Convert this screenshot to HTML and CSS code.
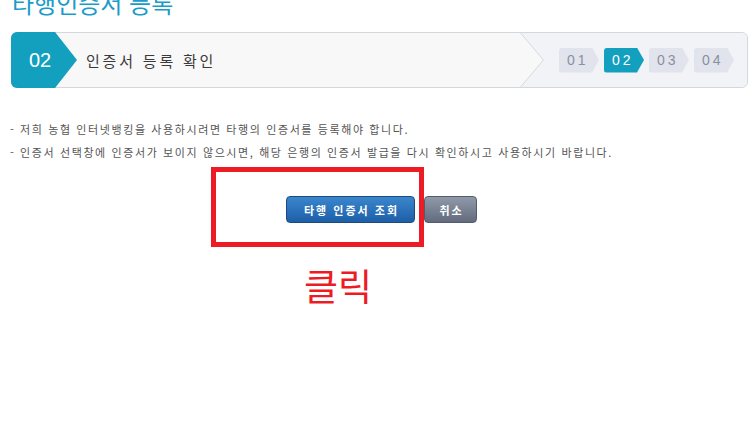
FILE: index.html
```html
<!DOCTYPE html>
<html lang="ko">
<head>
<meta charset="utf-8">
<link rel="stylesheet" href="styles.css">
</head>
<body>
<h1 class="title">타행인증서 등록</h1>
<div class="stepbar">
  <div class="badge">02</div>
  <div class="label">인증서 등록 확인</div>
  <svg class="sep" width="24" height="54" viewBox="0 0 24 54" preserveAspectRatio="none">
    <polygon points="0.5,0 24,0 24,54 0.5,54 23.5,27" fill="#f2f3f6"/>
    <polyline points="0.5,0 23.5,27 0.5,54" fill="none" stroke="#d6d9df" stroke-width="1"/>
  </svg>
  <div class="steps">
    <span class="chip">01</span>
    <span class="chip active">02</span>
    <span class="chip">03</span>
    <span class="chip">04</span>
  </div>
</div>
<ul class="notes">
  <li>- 저희 농협 인터넷뱅킹을 사용하시려면 타행의 인증서를 등록해야 합니다.</li>
  <li>- 인증서 선택창에 인증서가 보이지 않으시면, 해당 은행의 인증서 발급을 다시 확인하시고 사용하시기 바랍니다.</li>
</ul>
<div class="actions">
  <button class="btn btn-primary">타행 인증서 조회</button>
  <button class="btn btn-gray">취소</button>
</div>
<div class="callout"></div>
<p class="click">클릭</p>
</body>
</html>
```
FILE: styles.css
```css
html, body {
  margin: 0;
  padding: 0;
  background: #fff;
  font-family: "Noto Sans CJK KR", "Noto Sans", sans-serif;
}
body { position: relative; }

.title {
  margin: -11px 0 0 12px;
  font-size: 24px;
  line-height: 28px;
  font-weight: normal;
  color: #1a9cc8;
}

.stepbar {
  display: flex;
  align-items: stretch;
  margin: 15px 1px 0 11px;
  height: 54px;
  border: 1px solid #d3d7de;
  border-radius: 6px;
  background: #f8f8f8;
}

.badge {
  width: 66px;
  flex: none;
  margin: -1px 0 -1px -1px;
  padding-left: 18px;
  box-sizing: border-box;
  background: #13a0bf;
  border-radius: 6px 0 0 6px;
  clip-path: polygon(0 0, 44px 0, 66px 50%, 44px 100%, 0 100%);
  display: flex;
  align-items: center;
  color: #fff;
  font-family: "Liberation Sans", Arial, sans-serif;
  font-size: 20px;
}

.label {
  flex: 1;
  display: flex;
  align-items: center;
  padding-left: 9px;
  font-size: 15px;
  letter-spacing: 2.8px;
  color: #3a3a3a;
}

.sep {
  display: block;
  width: 24px;
  height: 54px;
  flex: none;
}

.steps {
  display: flex;
  align-items: center;
  gap: 5px;
  padding: 0 13px 0 15px;
  background: #f2f3f6;
  border-radius: 0 6px 6px 0;
}

.chip {
  width: 40px;
  height: 25px;
  padding-left: 8px;
  box-sizing: border-box;
  display: flex;
  align-items: center;
  background: #e1e4ec;
  color: #8a8fa0;
  border-radius: 3px;
  clip-path: polygon(0 0, 33px 0, 40px 50%, 33px 100%, 0 100%);
  font-family: "Liberation Sans", Arial, sans-serif;
  font-size: 14px;
  letter-spacing: 3px;
}
.chip.active {
  background: #13a0bf;
  color: #fff;
}

.notes {
  list-style: none;
  margin: 30px 0 0 10px;
  padding: 0;
  font-size: 11px;
  line-height: 23px;
  letter-spacing: 1.6px;
  color: #555;
}

.actions {
  display: flex;
  gap: 9px;
  margin-top: 32px;
  padding-left: 286px;
}

.btn {
  height: 27px;
  box-sizing: border-box;
  border-radius: 4px;
  font-family: "Noto Sans CJK KR", sans-serif;
  font-size: 11px;
  font-weight: bold;
  letter-spacing: 2px;
  color: #fff;
  padding: 0 13px 0 15px;
  cursor: pointer;
}
.btn-primary {
  width: 129px;
  border: 1px solid #1d4a7a;
  background: linear-gradient(#3a86cc, #1d5fa8);
}
.btn-gray {
  width: 53px;
  padding: 0 10px 0 12px;
  border: 1px solid #525c6c;
  background: linear-gradient(#9099a8, #626c7e);
}

.callout {
  position: absolute;
  left: 211px;
  top: 167px;
  width: 213px;
  height: 80px;
  box-sizing: border-box;
  border: 5px solid #ed1c24;
}

.click {
  margin: 40px 0 0 304px;
  font-size: 37px;
  line-height: 44px;
  color: #ed1c24;
}
```
